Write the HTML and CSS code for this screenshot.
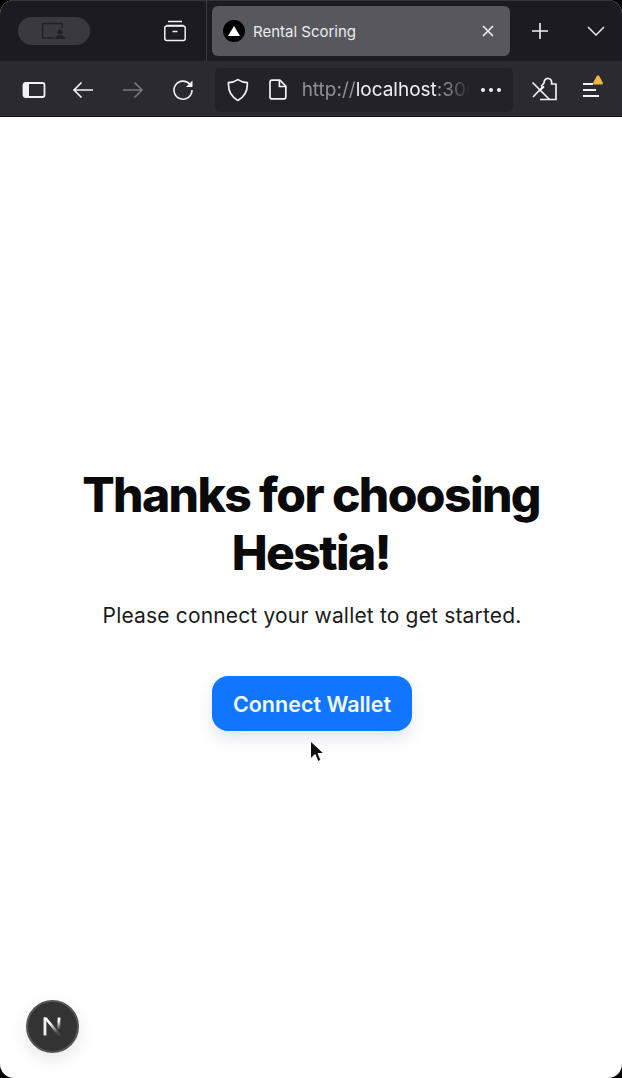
FILE: index.html
```html
<!DOCTYPE html>
<html lang="en">
<head>
    <meta charset="UTF-8">
    <meta name="viewport" content="width=device-width, initial-scale=1.0">
    <title>Rental Scoring</title>
    <link rel="stylesheet" href="styles.css">
</head>
<body>
    <div class="window">
        <!-- Tabs -->
        <div class="tabbar">
            <div class="tabbar-left">
                <div class="profile-pill">
                    <svg width="26" height="18" viewBox="0 0 26 18" fill="none">
                        <path d="M13 16H1.500V1.500H21V7" stroke="#232326" stroke-width="1.400"/>
                        <circle cx="19" cy="10" r="2.600" fill="#232326"/>
                        <path d="M14 17c0-2.700 2.200-3.800 5-3.800s5 1.100 5 3.800z" fill="#232326"/>
                    </svg>
                </div>
                <svg class="tabs-icon" width="24" height="24" viewBox="0 0 24 24" fill="none" stroke="#f2f2f4" stroke-width="1.500">
                    <path d="M5 2.500h14"/>
                    <path d="M3.500 6.500h17"/>
                    <rect x="1.800" y="7" width="20.400" height="14.500" rx="2"/>
                    <path d="M9.500 12.500h5"/>
                </svg>
            </div>
            <div class="tab">
                <span class="tab-favicon"><svg width="14" height="12" viewBox="0 0 14 12"><path d="M7 1l6 10H1z" fill="#fff"/></svg></span>
                <span class="tab-title">Rental Scoring</span>
                <svg class="tab-close" width="12" height="12" viewBox="0 0 12 12" stroke="#f2f2f4" stroke-width="1.600"><path d="M1 1l10 10M11 1L1 11"/></svg>
            </div>
            <svg class="newtab-icon" width="20" height="20" viewBox="0 0 20 20" stroke="#f2f2f4" stroke-width="1.600"><path d="M10 2v16M2 10h16"/></svg>
            <svg class="chevron-icon" width="18" height="10" viewBox="0 0 18 10" fill="none" stroke="#e8e8ea" stroke-width="1.500"><path d="M1 1l8 8 8-8"/></svg>
        </div>

        <!-- Toolbar -->
        <div class="toolbar">
            <svg class="tool-sidebar" width="24" height="18" viewBox="0 0 24 18" fill="none">
                <rect x="1.500" y="2" width="21" height="14" rx="2" stroke="#f2f2f4" stroke-width="1.800"/>
                <rect x="2" y="2.500" width="5" height="13" fill="#f2f2f4"/>
            </svg>
            <svg class="tool-back" width="22" height="18" viewBox="0 0 22 18" fill="none" stroke="#f2f2f4" stroke-width="1.700"><path d="M21 9H2M9.500 1.500L2 9l7.500 7.500"/></svg>
            <svg class="tool-forward" width="22" height="18" viewBox="0 0 22 18" fill="none" stroke="#77777b" stroke-width="1.700"><path d="M1 9h19M12.500 1.500L20 9l-7.500 7.500"/></svg>
            <svg class="tool-reload" width="22" height="22" viewBox="0 0 22 22" fill="none">
                <path d="M18 5.500A9 9 0 1 0 20 11" stroke="#f2f2f4" stroke-width="1.600"/>
                <path d="M20.500 1.500v6.500H14z" fill="#f2f2f4"/>
            </svg>
            <div class="urlbar">
                <svg class="url-shield" width="22" height="24" viewBox="0 0 22 24" fill="none" stroke="#f2f2f4" stroke-width="1.700"><path d="M11 1.500c3 2 6 3 9.500 3 .5 8-2 14-9.500 18-7.500-4-10-10-9.500-18 3.500 0 6.500-1 9.500-3z"/></svg>
                <svg class="url-page" width="18" height="21" viewBox="0 0 18 21" fill="none" stroke="#f2f2f4" stroke-width="1.700"><path d="M3 1h8l6 6v11a2 2 0 0 1-2 2H3a2 2 0 0 1-2-2V3a2 2 0 0 1 2-2z"/><path d="M10.500 1v6.500H17"/></svg>
                <span class="url-text"><span class="url-dim">http://</span>localhost<span class="url-dim">:3000</span></span>
                <span class="url-more"><i></i><i></i><i></i></span>
            </div>
            <svg class="tool-ext" width="26" height="26" viewBox="0 0 26 26" fill="none" stroke="#f2f2f4" stroke-width="1.700" stroke-linejoin="round">
                <path d="M9 22.500h16V7h-4.500c.6-2.600-.2-5-3-5.500-3-.4-4.500 2-4.500 4.500L10 9.500"/>
                <path d="M1.500 5.500l17 17"/>
                <path d="M2 20l10-10.500"/>
                <path d="M8 14l5-4.500"/>
            </svg>
            <div class="tool-menu">
                <i class="line-short"></i><i class="line-mid"></i><i></i>
                <svg class="menu-badge" width="12" height="10" viewBox="0 0 12 11"><path d="M6 .5c.8 0 1.200.5 1.600 1.200l3.600 6.500c.5 1 0 2.300-1.200 2.300H2C.8 10.500.3 9.200.8 8.200l3.600-6.500C4.800 1 5.200.500 6 .5z" fill="#f5b73d"/></svg>
            </div>
        </div>

        <!-- Page -->
        <main class="page">
            <h1>Thanks for choosing Hestia!</h1>
            <p class="lead">Please connect your wallet to get started.</p>
            <button class="connect-button">Connect Wallet</button>
        </main>

        <svg class="cursor" width="16" height="24" viewBox="0 0 16 24">
            <path d="M1.500 1v18l4.500-4.500 3 7 3-1.300-3-6.700h6z" fill="#111" stroke="#fff" stroke-width="1"/>
        </svg>

        <div class="next-badge">
            <svg width="23" height="23" viewBox="0 0 18 18">
                <defs>
                    <linearGradient id="next-fade" x1="0" y1="0" x2="0.4" y2="1">
                        <stop offset="0.4" stop-color="#fff"/>
                        <stop offset="1" stop-color="#fff" stop-opacity="0.1"/>
                    </linearGradient>
                </defs>
                <rect x="2" y="2" width="2.200" height="14" fill="#f2f2f2"/>
                <path d="M2 2h2.500L16 16h-2.800z" fill="url(#next-fade)"/>
                <rect x="13" y="2" width="2.200" height="9" fill="url(#next-fade)"/>
            </svg>
        </div>
    </div>
</body>
</html>
```

FILE: styles.css
```css
* {
    box-sizing: border-box;
}

html,
body {
    margin: 0;
    padding: 0;
    height: 100%;
    background-color: #000;
    overflow: hidden;
}

.window {
    position: relative;
    display: flex;
    flex-direction: column;
    height: 1078px;
    background-color: #fff;
    border-radius: 14px;
    overflow: hidden;
    font-family: Inter, "Liberation Sans", sans-serif;
}

/* Tabs */
.tabbar {
    display: flex;
    align-items: center;
    height: 61px;
    flex-shrink: 0;
    background-color: #1c1b22;
    border-top: 1px solid #333338;
}

.tabbar-left {
    display: flex;
    align-items: center;
    justify-content: space-between;
    width: 207px;
    height: 100%;
    padding: 0 19px 0 18px;
    border-right: 1px solid #3c3c42;
}

.profile-pill {
    display: flex;
    align-items: center;
    justify-content: center;
    width: 72px;
    height: 28px;
    border-radius: 14px;
    background-color: #3a3a3e;
}

.tab {
    display: flex;
    align-items: center;
    width: 298px;
    height: 50px;
    margin-left: 5px;
    padding: 0 16px 0 11px;
    border-radius: 6px;
    background-color: #57575d;
    color: #ececee;
    font-size: 15px;
}

.tab-favicon {
    display: flex;
    align-items: center;
    justify-content: center;
    width: 22px;
    height: 22px;
    border-radius: 50%;
    background-color: #000;
}

.tab-title {
    flex: 1;
    margin-left: 8px;
}

.newtab-icon {
    margin-left: 20px;
}

.chevron-icon {
    margin-left: 37px;
}

/* Toolbar */
.toolbar {
    display: flex;
    align-items: center;
    height: 56px;
    flex-shrink: 0;
    padding: 2px 0 0 22px;
    background-color: #2b2a30;
    border-bottom: 1px solid #18181c;
}

.tool-back {
    margin-left: 26px;
}

.tool-forward {
    margin-left: 28px;
}

.tool-reload {
    margin-left: 28px;
}

.urlbar {
    display: flex;
    align-items: center;
    width: 298px;
    height: 44px;
    margin-left: 21px;
    padding: 0 12px;
    border-radius: 5px;
    background-color: #232228;
}

.url-page {
    margin-left: 20px;
}

.url-text {
    width: 170px;
    margin-left: 15px;
    overflow: hidden;
    white-space: nowrap;
    color: #f0f0f2;
    font-size: 19px;
    -webkit-mask-image: linear-gradient(to right, #000 85%, transparent 100%);
    mask-image: linear-gradient(to right, #000 85%, transparent 100%);
}

.url-dim {
    color: #8f8f94;
}

.url-more {
    display: flex;
    gap: 4px;
    margin-left: 11px;
}

.url-more i {
    width: 4px;
    height: 4px;
    border-radius: 50%;
    background-color: #f2f2f4;
}

.tool-ext {
    margin-left: 18px;
}

.tool-menu {
    position: relative;
    display: flex;
    flex-direction: column;
    gap: 4px;
    width: 16px;
    margin-left: 26px;
}

.tool-menu i {
    display: block;
    height: 2px;
    background-color: #f2f2f4;
}

.tool-menu .line-short {
    width: 10px;
}

.tool-menu .line-mid {
    width: 13px;
}

.menu-badge {
    position: absolute;
    top: -8px;
    right: -5px;
}

/* Page */
.page {
    flex: 1;
    display: flex;
    flex-direction: column;
    align-items: center;
    padding: 349px 60px 0;
    text-align: center;
}

h1 {
    margin: 0;
    color: #0a0a0a;
    font-size: 48px;
    font-weight: 800;
    line-height: 58px;
    letter-spacing: -1.600px;
}

.lead {
    margin: 20px 0 0 2px;
    color: #1a1a1a;
    font-size: 21px;
    line-height: 28px;
    letter-spacing: 0.170px;
}

.connect-button {
    width: 200px;
    height: 55px;
    margin: 46px 0 0 2px;
    border: none;
    border-radius: 16px;
    background-color: #0f76fd;
    box-shadow: 0 8px 16px rgba(15, 60, 120, 0.12);
    color: #f4f8ff;
    font-family: inherit;
    font-size: 21.500px;
    font-weight: 600;
}

.cursor {
    position: absolute;
    top: 740px;
    left: 309px;
}

.next-badge {
    position: absolute;
    top: 1000px;
    left: 26px;
    display: flex;
    align-items: center;
    justify-content: center;
    width: 53px;
    height: 53px;
    border: 2px solid #555;
    border-radius: 50%;
    background-color: #333;
    box-shadow: 0 6px 18px rgba(0, 0, 0, 0.1);
}
```
